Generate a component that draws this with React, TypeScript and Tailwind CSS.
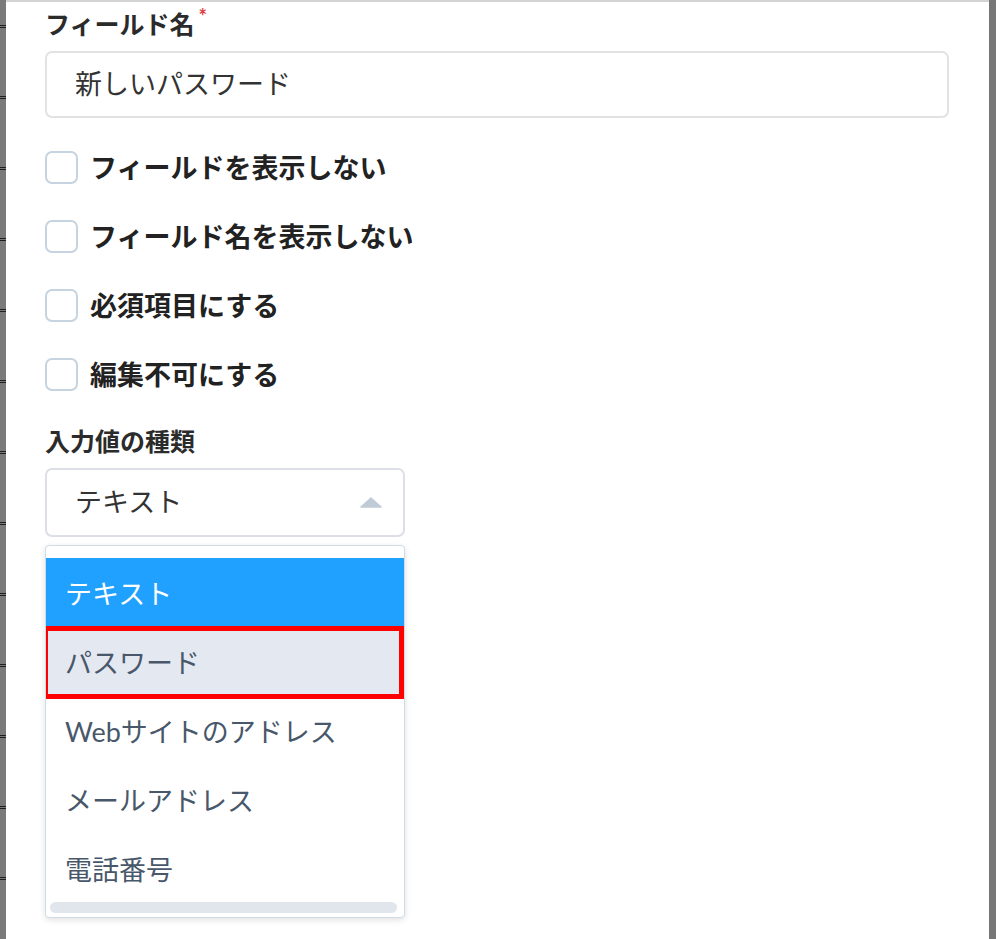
import React from "react";

const checks = ["フィールドを表示しない", "フィールド名を表示しない", "必須項目にする", "編集不可にする"];
const options = ["テキスト", "パスワード", "Webサイトのアドレス", "メールアドレス", "電話番号"];

// marks on the page behind the modal, showing at the left edge
function LeftEdge() {
    return (
        <div className="flex w-[6px] shrink-0 flex-col gap-[68px] bg-[#7a7a7a] pt-[25px]">
            {Array.from({ length: 13 }).map((_, i) => (
                <div key={i} className="flex h-[3px] flex-col justify-between">
                    <div className="h-px bg-[#1f1f1f]" />
                    <div className="h-px bg-[#1f1f1f]" />
                </div>
            ))}
        </div>
    );
}

export default function App() {
    return (
        <div
            className="flex h-[939px] w-[996px] overflow-hidden bg-white"
            style={{ fontFamily: '"Lato", "Noto Sans CJK JP", sans-serif' }}
        >
            <LeftEdge />

            <main className="flex-1 border-t-2 border-[#d4d4d4] pl-[39px] pr-[40px]">
                <div className="mt-[6px] flex h-[32px] items-center text-[25px] leading-[32px] font-bold text-[#2b2b2b]">
                    フィールド名
                    <span className="mb-[16px] ml-[4px] text-[20px] leading-none text-[#e0393e]">*</span>
                </div>

                <div className="mt-[11px] flex h-[67px] items-center rounded-[7px] border-2 border-[#e2e2e2] pl-[28px] text-[27px] text-[#333]">
                    新しいパスワード
                </div>

                <div className="mt-[33px] flex flex-col gap-[36px]">
                    {checks.map((label) => (
                        <label key={label} className="flex h-[33px] items-center gap-[12px]">
                            <span className="h-[33px] w-[33px] shrink-0 rounded-[7px] border-2 border-[#c6d3e0] bg-white" />
                            <span className="text-[27px] leading-none font-bold text-[#222]">{label}</span>
                        </label>
                    ))}
                </div>

                <div className="mt-[34px] flex h-[32px] items-center text-[25px] leading-[32px] font-bold text-[#2b2b2b]">
                    入力値の種類
                </div>

                <div className="mt-[11px] flex h-[69px] w-[360px] items-center justify-between rounded-[7px] border-2 border-[#dcdfe5] pl-[28px] pr-[21px] text-[27px] text-[#333]">
                    テキスト
                    <svg width="22" height="11" viewBox="0 0 22 11">
                        <path d="M11 1 L21 10 L1 10 Z" fill="#c0cbd8" stroke="#c0cbd8" strokeWidth="1.5" strokeLinejoin="round" />
                    </svg>
                </div>

                {/* open dropdown */}
                <div className="relative mt-[8px] h-[373px] w-[360px] overflow-hidden rounded-[4px] border border-[#d1dbe5] bg-white pt-[12px] shadow-[0_2px_6px_rgba(0,0,0,0.12)]">
                    {options.map((opt, i) => (
                        <div
                            key={opt}
                            className={
                                i === 0
                                    ? "flex h-[69px] items-center bg-[#20a0ff] pt-[4px] pl-[19px] text-[27px] text-white"
                                    : i === 1
                                      ? "relative flex h-[69px] items-center bg-[#e4e8f1] pt-[4px] pl-[19px] text-[27px] text-[#48576a]"
                                      : "flex h-[69px] items-center pt-[4px] pl-[19px] text-[27px] text-[#48576a]"
                            }
                        >
                            {opt}
                            {i === 1 && (
                                <span className="absolute top-[-1px] left-[-3px] h-[73px] w-[361px] border-[5px] border-[#ff0000]" />
                            )}
                        </div>
                    ))}
                    <div className="absolute right-[7px] bottom-[4px] left-[4px] h-[11px] rounded-full bg-[#e1e6ed]" />
                </div>
            </main>

            <div className="w-[7px] shrink-0 bg-[#777]" />
        </div>
    );
}
